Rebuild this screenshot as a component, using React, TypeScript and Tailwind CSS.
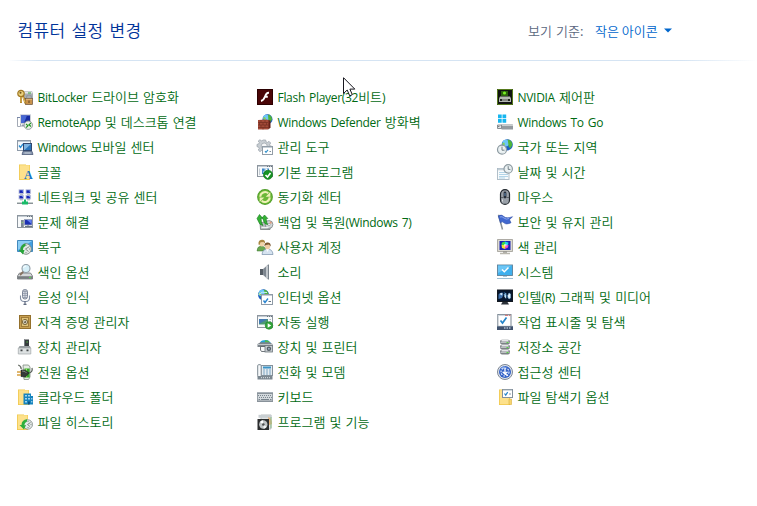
import React from 'react'

interface Item {
  label: string
  icon: React.ReactNode
}

function Folder({ x = 2 }: { x?: number }) {
  return (
    <>
      <path d={`M${x} 0.5h7v0.5h4v15h-11z`} fill="#f0c94e" />
      <path d={`M${x + 0.8} 1.2h9.6v14h-9.6z`} fill="#fde18b" />
    </>
  )
}

function Clock({ cx, cy, r }: { cx: number; cy: number; r: number }) {
  return (
    <>
      <circle cx={cx} cy={cy} r={r} fill="#edf3f4" stroke="#8d9aa1" strokeWidth="1.2" />
      <circle cx={cx} cy={cy} r={r - 1.3} fill="none" stroke="#c3d0d6" strokeWidth="0.6" strokeDasharray="0.6 1.2" />
      <path d={`M${cx} ${cy - r + 1.5}v${r - 1}h${r - 2}`} fill="none" stroke="#65747c" strokeWidth="0.9" />
    </>
  )
}

function Globe({ cx, cy, r }: { cx: number; cy: number; r: number }) {
  return (
    <>
      <circle cx={cx} cy={cy} r={r} fill="#1d5fc4" />
      <circle cx={cx - r * 0.25} cy={cy - r * 0.3} r={r * 0.6} fill="#6cc6f8" />
      <path d={`M${cx + 0.5} ${cy - r + 0.3}q${r * 0.8} 0.8 ${r - 1} ${r}l-2 ${r * 0.6}l-1.6 -2z`} fill="#4fb53b" />
      <path d={`M${cx - r + 0.4} ${cy - 1}l2-1.6l1 2l-1.4 1.8z`} fill="#82d25d" />
    </>
  )
}

function Win({ h = 12 }: { h?: number }) {
  return (
    <>
      <rect x="0.5" y="1.5" width="15" height={h} fill="#f8fafb" stroke="#8d969f" />
      <path d="M1 2.5h14" stroke="#c3cbd2" />
      <path d="M10 2.5h1m1 0h1m1 0h1" stroke="#69747e" />
    </>
  )
}

const bitlocker = (
  <>
    <path d="M6 3.5L8 2h7l1 3v5H6z" fill="#a9aeb3" />
    <path d="M7.500 2.500h7.500v2H7z" fill="#e4e7e9" />
    <path d="M11 4h3" stroke="#36a536" />
    <path d="M9.500 10V8.500a2.500 2.500 0 015 0V10" fill="none" stroke="#929aa0" strokeWidth="1.2" />
    <rect x="8.500" y="9.500" width="7" height="6" fill="#c9924c" stroke="#68513a" strokeWidth="0.7" />
    <path d="M9 10.300h6" stroke="#eac38b" strokeWidth="0.8" />
    <path d="M12 11.500v2.500" stroke="#5a4220" />
    <circle cx="4" cy="4.500" r="3.200" fill="#ecd27c" stroke="#a07927" strokeWidth="1.200" />
    <circle cx="3.500" cy="3.800" r="1" fill="#6e521e" />
    <path d="M4 7.500v6.500M6 7l2.500 7.500" stroke="#a87a20" strokeWidth="2" />
    <path d="M4 8v5.500M6 8l2 5.500" stroke="#f2d681" strokeWidth="0.8" />
  </>
)

const remoteApp = (
  <>
    <path d="M0.5 3.500h3v9h-3z" fill="#fff" stroke="#a3aab5" />
    <path d="M0 3.500h3" stroke="#7988a8" />
    <rect x="3.500" y="0.9" width="10" height="8.600" fill="#172ca2" stroke="#cbd0d7" />
    <path d="M4 1.500h6L7 9H4z" fill="#4767d4" />
    <path d="M5 10.500h3v2H4z" fill="#929baa" />
    <circle cx="11.300" cy="11.200" r="4.200" fill="#e9eee9" stroke="#8d9698" strokeWidth="0.9" />
    <path d="M9 10l2 1.700l-2 2M14 9l-2 1.700l2 1.800" fill="none" stroke="#219522" strokeWidth="1.1" />
  </>
)

const mobility = (
  <>
    <rect x="0.5" y="1.500" width="13" height="10" fill="#f4f8fc" stroke="#8e9aa8" />
    <path d="M1 2.500h12" stroke="#bbc7d1" />
    <path d="M2 6.500l1.500 2L6 5" fill="none" stroke="#268bd0" strokeWidth="1.300" />
    <rect x="6.500" y="4.500" width="8" height="7" fill="#2b76bb" stroke="#31486f" />
    <path d="M7 5h7L7.500 11H7z" fill="#7cb4e2" />
    <path d="M6 12.300h9l1 3.200H5z" fill="#8997b0" stroke="#3f4f6f" strokeWidth="0.7" />
    <path d="M7.500 14h6" stroke="#dce4ea" strokeWidth="0.8" />
  </>
)

const fonts = (
  <>
    <Folder />
    <text x="7" y="15" fontFamily="Liberation Serif, serif" fontWeight="bold" fontSize="12" fill="#1775c4">A</text>
  </>
)

const network = (
  <>
    {[[2, 0.8], [9, 0.8], [2, 6.3], [9, 6.3]].map(([x, y]) => (
      <g key={`${x}-${y}`}>
        <rect x={x} y={y} width="4.6" height="3.6" fill="#1524b4" stroke="#c0c7dd" strokeWidth="0.9" />
        <path d={`M${x + 2.5} ${y + 0.7}h1.5v1.5z`} fill="#6c8af5" />
        <path d={`M${x + 1} ${y + 4.5}h3`} stroke="#9aa2b0" strokeWidth="0.9" />
      </g>
    ))}
    <path d="M0 14h16" stroke="#8b9298" strokeWidth="2" />
    <path d="M0 13.500h16" stroke="#d4dedb" strokeWidth="0.8" />
    <path d="M7 10.500h2V12.500h2v3H5v-3h2z" fill="#19ba68" />
  </>
)

const troubleshoot = (
  <>
    <Win h={12} />
    <rect x="7.500" y="5.500" width="7.500" height="5.500" fill="#1c31b2" stroke="#9aa3b8" strokeWidth="0.8" />
    <path d="M10 6h4.500v4z" fill="#627ff0" />
    <path d="M4 6h2.800v7H4z" fill="#7b8893" />
    <path d="M4.600 8.500h1.500" stroke="#8be26c" strokeWidth="0.7" />
    <path d="M8 12.500h7M11 11v1" stroke="#6a7682" />
  </>
)

const recovery = (
  <>
    <path d="M0.5 1.500h15V12.500h-15z" fill="#439fe0" stroke="#4289bd" />
    <path d="M1 2h14L1 11z" fill="#8bcef5" />
    <circle cx="9" cy="10" r="5.300" fill="#e2e9e6" stroke="#7a867f" strokeWidth="0.9" />
    <path d="M8.500 10l4-2.500M8.500 10l3 2.500M9 6v1m0 6v1m4-4h-1" fill="none" stroke="#69766e" strokeWidth="0.8" />
    <path d="M8.500 4.500A6 6 0 003.500 11H1.700L6 15.500l1.500-4.500H6A4 4 0 018.500 7z" fill="#27a53a" />
  </>
)

const indexing = (
  <>
    <path d="M2.500 9h11l2 3v3H0.5v-3z" fill="#d5d8da" stroke="#6b7073" strokeWidth="0.8" />
    <path d="M0.8 12.200h14.500v2.700H0.8z" fill="#787d80" />
    <path d="M12 13.500h2" stroke="#53dc48" />
    <path d="M6.800 7.200L3 11" stroke="#85715f" strokeWidth="1.800" />
    <circle cx="9" cy="4.500" r="4" fill="#d6eff8" stroke="#919da6" strokeWidth="1.100" />
    <path d="M6.500 4A2.500 2.500 0 019 2" fill="none" stroke="#fff" />
  </>
)

const speech = (
  <>
    <rect x="5.500" y="0.5" width="5" height="9.500" rx="2.300" fill="#d6dae3" stroke="#737d90" strokeWidth="0.9" />
    <path d="M6 2.500h4M6 4.500h4M6 6.500h4M6 8.500h4M8 1v8.500" stroke="#8992a3" strokeWidth="0.7" />
    <path d="M3.500 6.500V9.500A3.500 3.500 0 007 12.500h2A3.500 3.500 0 0012.500 9.500V6.500" fill="none" stroke="#8490a6" strokeWidth="1.100" />
    <path d="M8 12v3M6.500 15.300h3" stroke="#606b80" strokeWidth="1.200" />
  </>
)

const credential = (
  <>
    <rect x="2.500" y="1.500" width="11" height="13" fill="#c79f52" stroke="#94702c" />
    <rect x="4.500" y="3.500" width="7" height="9" fill="#e0c377" stroke="#9a7736" strokeWidth="0.9" />
    <circle cx="8" cy="8" r="2.600" fill="#d5cdb5" stroke="#745c2d" strokeWidth="0.9" />
    <circle cx="8" cy="8" r="1.100" fill="#5c5442" />
    <path d="M6.500 6.300l1 .9" stroke="#fff7df" />
  </>
)

const deviceManager = (
  <>
    <path d="M7 0.5h5v8h-5z" fill="#363b3e" />
    <path d="M7 .5h1v8h-1z" fill="#747b80" />
    <path d="M9.500 3h1.200" stroke="#63e44f" />
    <path d="M2.500 7h10.500l.8 2H1.500z" fill="#999fa2" />
    <path d="M1.300 9h12.500v6H1.300z" fill="#dce0e1" stroke="#a2a7a9" strokeWidth="0.7" />
    <path d="M3.500 10.500h2v1.800h-2zM9.500 10.500h2v1.800h-2z" fill="#414648" />
  </>
)

const power = (
  <>
    <path d="M6 1h5.500l1.500 2v10l-1.500 2.500H7z" fill="#e3eae3" stroke="#7d8c7f" strokeWidth="0.8" />
    <path d="M7.500 4.500h5.100v9H7.500z" fill="#35a728" />
    <path d="M8.500 4.500H10v9H8.500z" fill="#9aed6e" />
    <path d="M1.200 1q3 1 3 4" fill="none" stroke="#676d66" strokeWidth="1.300" />
    <path d="M4 6l4.500 .2L12 9l-3.500 4-4.500-.5z" fill="#353a38" stroke="#171c1a" strokeWidth="0.6" />
    <path d="M5 7l3 .5 1.500 1.500" fill="none" stroke="#899089" strokeWidth="0.9" />
    <path d="M0 8h4M0 11h4" stroke="#d6a040" strokeWidth="1.300" />
    <path d="M12 9q4-1 3-5" fill="none" stroke="#555d58" strokeWidth="1.200" />
  </>
)

const workFolders = (
  <>
    <Folder x={1} />
    <path d="M6.500 4.500h7.500V7h2v8.500H6.500z" fill="#1684be" />
    <path d="M8.200 6h1.600v1.600H8.200zM11.200 6h1.600v1.600h-1.600zM8.200 9h1.600v1.600H8.200zM11.200 9h1.600v1.600h-1.600zM8.200 12h1.600v1.600H8.200zM14.300 9h1v1.500h-1zM14.300 12h1v1.500h-1z" fill="#c5e9fb" />
    <path d="M11.200 12.500h1.500v3h-1.500z" fill="#0a4775" />
  </>
)

const fileHistory = (
  <>
    <Folder x={0} />
    <circle cx="10.800" cy="10.500" r="4.700" fill="#e4e9e8" stroke="#89938f" strokeWidth="0.9" />
    <path d="M10.500 10.500l3-2M10.500 10.500l2.500 2M11 7v1m0 5v1m3.500-3.500h-1" fill="none" stroke="#68736f" strokeWidth="0.8" />
    <path d="M10 5.300A6 6 0 004.500 11H2.500L7 15.500l2-4.500-1.700 .2Q7.500 8.500 10 7.500z" fill="#2faf3c" />
  </>
)

const flash = (
  <>
    <path d="M0 0h16v16H0z" fill="#4a0507" />
    <path d="M.5 .5h15v15H.5z" fill="none" stroke="#2b0001" />
    <path d="M12 3.800Q9.500 3.500 8 7.500T4 12M7.800 7.800h3" fill="none" stroke="#fff" strokeWidth="1.900" />
  </>
)

const firewall = (
  <>
    <Globe cx={10.5} cy={5.3} r={5} />
    <path d="M1 6l9-.5 2 1v8L11 15.500H1z" fill="#a34a38" />
    <path d="M1 8.500h10M1 11h10.500M1 13.500h10.500M4 6v2.500M8 6v2.500M2.500 8.500V11M6 8.500V11M9.500 8.500V11M4 11v2.500M8 11v2.500M6 13.500V15.500" stroke="#6b2a20" strokeWidth="0.6" fill="none" />
    <path d="M11.500 6v9.500l2-2V6.500z" fill="#652018" />
  </>
)

const adminTools = (
  <>
    <path d="M6.300 1h2.400l.3 1.800 1.500.6L12 2.300l1.700 1.700-1 1.600.5 1.400 1.800.4v2.300H9v4.300H6.500l-.6-1.900-1.400-.6L3 12.700 1.200 11l1-1.500-.6-1.400L0 7.700V5.400L1.600 5l.7-1.500L1.200 2 2.900.8l1.600 1 1.500-.6z" fill="#c8ced3" stroke="#969fa7" strokeWidth="0.7" />
    <circle cx="7.200" cy="7" r="3" fill="#f6f7f8" stroke="#a0a8af" strokeWidth="0.8" />
    <rect x="5.500" y="7.500" width="10" height="8" fill="#fff" stroke="#929da7" />
    <path d="M6 8.500h9" stroke="#c7d0d7" />
    <path d="M8 12l1 1.400 2-2.600" fill="none" stroke="#308fc9" strokeWidth="1.100" />
    <path d="M12.500 12.500h1.500" stroke="#819099" />
  </>
)

const defaultPrograms = (
  <>
    <Win h={11} />
    <path d="M2.500 4.500v6.500" stroke="#c5cdd4" />
    <path d="M5 4.500h7V10H5z" fill="#3d87c8" />
    <path d="M6 8.500l4-3.500M7.500 5H10v2.500" stroke="#fff" fill="none" />
    <circle cx="11" cy="10.800" r="4.600" fill="#169323" stroke="#107018" strokeWidth="0.6" />
    <path d="M8.500 11l2 2 3-4" fill="none" stroke="#fff" strokeWidth="1.600" />
  </>
)

const sync = (
  <>
    <circle cx="8" cy="8" r="7.900" fill="#4f9c28" />
    <circle cx="8" cy="8" r="7" fill="#6cb838" />
    <path d="M3.300 7.800A4.800 4.800 0 0111.300 4.300" fill="none" stroke="#f0f1b8" strokeWidth="2" />
    <path d="M13.300 3V7.700H8.700z" fill="#f0f1b8" />
    <path d="M12.700 8.400A4.800 4.800 0 014.700 11.800" fill="none" stroke="#f0f1b8" strokeWidth="2" />
    <path d="M2.700 13V8.500h4.600z" fill="#f0f1b8" />
  </>
)

const backup = (
  <>
    <path d="M3 9l8-2 3 5-1 3.500H3.500z" fill="#b8bebf" stroke="#646e6c" strokeWidth="0.7" />
    <circle cx="12" cy="10.500" r="3.900" fill="#d2d8d9" stroke="#7b8586" strokeWidth="0.8" />
    <circle cx="12" cy="10.500" r="1.200" fill="#fff" stroke="#6c7678" strokeWidth="0.5" />
    <path d="M13 7l2.500 2-3 1z" fill="#dc9b82" />
    <path d="M1.700 8L0 4.500 2.500.5 5.500 4H4q0 5 2 7.500Q2.500 11 1.700 8zM7 8L5.800 4.500H4.600L7.500 1 10.800 4.500H9.200q0 4 1.600 6Q7.500 10.500 7 8z" fill="#35b234" stroke="#177a22" strokeWidth="0.6" />
    <path d="M4.500 13.500h7" stroke="#f0f2f2" />
  </>
)

const users = (
  <>
    <path d="M0 12q0-4.500 4-5 5 .5 5 5z" fill="#6aa852" stroke="#3b7732" strokeWidth="0.5" />
    <ellipse cx="4.700" cy="4.300" rx="2.500" ry="3.200" fill="#efd3a9" />
    <path d="M1.500 5.500Q1 1 4.800.7T8 4.500L6.500 3 3.500 3.200 2.500 6z" fill="#a98743" />
    <path d="M5 15.500Q5.500 10 10.500 10T16 15.500z" fill="#d6e3f0" stroke="#7991aa" strokeWidth="0.7" />
    <path d="M9 10l1.500 3L12 10z" fill="#fff" />
    <ellipse cx="10.500" cy="7" rx="2.600" ry="3.300" fill="#efcaa3" />
    <path d="M7.500 7.500Q7 3.500 10.500 3.500T13.700 7.500L12 5.500 8.700 6z" fill="#78552f" />
  </>
)

const sound = (
  <>
    <path d="M3 5h3v6H3z" fill="#555d65" />
    <path d="M6 5l5-4.500v15L6 11z" fill="#a5acb3" />
    <path d="M6.300 5.200L9 2.800v10.500l-2.700-2.500z" fill="#7c858e" />
    <path d="M11.500 .5v15" stroke="#7b848c" />
    <path d="M10 2v12" stroke="#dde1e4" />
  </>
)

const internet = (
  <>
    <Globe cx={6.5} cy={5.8} r={5.5} />
    <path d="M1.500 5.500Q5 2 10 3.500" fill="none" stroke="#c8eefa" />
    <rect x="4.500" y="5.500" width="11" height="10" fill="#fff" stroke="#8e9aa6" />
    <path d="M5 6.500h10" stroke="#c6ced7" />
    <path d="M6.500 11.500l1.500 2 3-4" fill="none" stroke="#2b85d0" strokeWidth="1.400" />
    <path d="M11.500 12.500h2.500" stroke="#657684" />
  </>
)

const autoplay = (
  <>
    <Win h={12} />
    <path d="M2 5h9v5.500H2z" fill="#4b9a72" />
    <path d="M2 5h9L2 10z" fill="#4479b0" />
    <path d="M12.500 5.500h1.500M12.500 7.500h1.500" stroke="#a9b3bc" />
    <circle cx="12" cy="11.500" r="3.800" fill="#31a539" stroke="#238329" strokeWidth="0.6" />
    <path d="M10.700 9.200l3.500 2.300-3.500 2.300z" fill="#fff" />
  </>
)

const printers = (
  <>
    <path d="M3 3.500Q5 .5 11 1.200l3 2.800H3z" fill="#22a4d6" />
    <path d="M8 1.200q4-.3 5 2.500H8z" fill="#50ba4c" />
    <path d="M0.5 5l3-1.700h9l3 1.700v3H.5z" fill="#7c848b" />
    <path d="M1 5.500h14" stroke="#c0c6ca" />
    <path d="M3.500 7.500h5V12.500h-4L3.500 11z" fill="#f6f7f8" stroke="#4e565c" strokeWidth="0.8" />
    <rect x="8" y="6.500" width="7.500" height="6.500" fill="#c6cbcf" stroke="#6c757c" strokeWidth="0.8" />
    <circle cx="11.900" cy="9.800" r="2.200" fill="#535d66" />
    <circle cx="11.900" cy="9.800" r="1" fill="#9eafbe" />
  </>
)

const phone = (
  <>
    <rect x="4" y="1.500" width="11.500" height="10" fill="#e4ebf0" stroke="#84919b" />
    <rect x="0.7" y="0.7" width="3.500" height="12" rx="1" fill="#f6f8fa" stroke="#7d8992" />
    <path d="M6 2.500h8v2H6z" fill="#3993c7" />
    <path d="M6 6h2M9 6h2M12 6h2M6 8h2M9 8h2M12 8h2M6 10h2M9 10h2M12 10h2" stroke="#6f9dbd" strokeWidth="0.9" />
    <path d="M.5 12h15v3.500H.5z" fill="#7b8790" />
    <path d="M4 13.700h1m1 0h1m1 0h1m1 0h1m1 0h1" stroke="#dde4e8" />
  </>
)

const keyboard = (
  <>
    <path d="M0 3h16v10H0z" fill="#89929a" />
    <path d="M0 3.500h16" stroke="#a9b1b8" />
    <path d="M.8 5h14.400v6.500H.8z" fill="#d3d9dd" />
    <path d="M1 6.500h14M2 8.500h13" stroke="#7b868f" strokeDasharray="1 1" />
    <path d="M1.500 10.500h1.500m1 0h8m1 0h1.500" stroke="#78838c" />
  </>
)

const programs = (
  <>
    <path d="M4 1h10v14H4z" fill="#e0e3e4" stroke="#a8adaf" strokeWidth="0.7" />
    <path d="M1.500 .8h13v3h-13z" fill="#c9cfd2" />
    <path d="M11 3q4 1 4 7l-3 1z" fill="#e3b27c" />
    <path d="M14 3v11" stroke="#88bd88" />
    <rect x="0.5" y="5" width="11.500" height="11" fill="#2b2d2e" />
    <circle cx="6.300" cy="10.500" r="4.200" fill="#bfc3c5" />
    <path d="M6.300 10.500L3 8a4.200 4.200 0 013-1.700z" fill="#fff" />
    <path d="M6.300 10.500l3.400 2.300a4.200 4.200 0 01-3 1.900z" fill="#f2f4f4" />
    <circle cx="6.300" cy="10.500" r="1.300" fill="#4a4d4e" />
  </>
)

const nvidia = (
  <>
    <path d="M0 0h16v16H0z" fill="#101310" />
    <path d="M.5 .5h15v15H.5z" fill="none" stroke="#567a1d" />
    <path d="M4 2h7v5H4z" fill="#2c650c" />
    <circle cx="7.500" cy="4" r="1.600" fill="#79ec25" />
    <path d="M3 7.500h10l1 2v3.500H2V9.500z" fill="#b4b9b2" />
    <path d="M3 10h10v2H3z" fill="#20251e" />
    <path d="M5 11h6" stroke="#e4e7e1" />
  </>
)

const windowsToGo = (
  <>
    <path d="M1 .5h3.700v3.700H1zM5.500 .5h3.700v3.700H5.500zM1 5h3.700v3.700H1zM5.500 5h3.700v3.700H5.500z" fill="#16b6ef" />
    <path d="M4.500 10h11l.5 1v4.500H4.500z" fill="#949a9f" />
    <path d="M4.500 10.300H16v1.500H4.500z" fill="#d8dbdd" />
    <path d="M.5 11h4v3.500h-4z" fill="#e1e3e4" stroke="#70777c" strokeWidth="0.8" />
    <path d="M1.300 12h1v1h-1z" fill="#555" />
  </>
)

const region = (
  <>
    <Globe cx={10.2} cy={5.8} r={5.6} />
    <Clock cx={5} cy={10.7} r={4.5} />
  </>
)

const dateTime = (
  <>
    <rect x="0.5" y="4.500" width="11.500" height="11" fill="#f8fbfc" stroke="#a9b9c4" strokeWidth="0.9" />
    <path d="M1 5.500h11" stroke="#c2ced5" strokeWidth="1.600" />
    <path d="M2.500 8.500h8.500M2.500 10.500h8.500M2.500 12.500h8.500M2.500 14h6" stroke="#6faed4" strokeWidth="1" strokeDasharray="1 1" />
    <Clock cx={11.2} cy={4.9} r={4.2} />
  </>
)

const mouse = (
  <>
    <rect x="3.500" y="0.6" width="9" height="14.800" rx="4.500" fill="#99a0a8" stroke="#23292f" strokeWidth="1.200" />
    <path d="M4 8.500h2.500m3 0H12" stroke="#42494f" strokeWidth="0.7" />
    <rect x="6.600" y="2.500" width="2.800" height="7" rx="1.400" fill="#252d38" />
    <path d="M8 4v3" stroke="#6a95be" />
    <path d="M5.500 10.500v2" stroke="#dde0e3" />
  </>
)

const security = (
  <>
    <path d="M1.500 .8l4 14.700" stroke="#8a9297" strokeWidth="1.500" />
    <path d="M1.300 2q3-2 5.500.5t8.700.2l-3 3 1.500 3Q9 11 7 8.800T3.500 9z" fill="#4168cf" stroke="#2c4ca6" strokeWidth="0.6" />
    <path d="M3 3q2-1 4 1t5 .5" fill="none" stroke="#88a4ee" />
  </>
)

const color = (
  <>
    <rect x="0.6" y="0.6" width="14.800" height="11.800" fill="#e0ded6" stroke="#a1a098" strokeWidth="0.9" />
    <path d="M2.500 2h11v9h-11z" fill="#1823b4" />
    <path d="M5 3.500l3-1v3.500H4.500z" fill="#41d843" />
    <path d="M8 2.500l3.500 1L11 6H8z" fill="#22d3e4" />
    <path d="M4.500 6H8v4L5 9z" fill="#f6dd31" />
    <path d="M8 6h3.500L11 8.500 8 10z" fill="#e946ca" />
    <path d="M7 5h2.500v2.500H7z" fill="#fff" opacity=".6" />
    <path d="M6 12.500h4v1.200H6z" fill="#8c8b84" />
    <path d="M3 14.500h10" stroke="#b9b7ae" strokeWidth="1.500" />
  </>
)

const system = (
  <>
    <rect x="0.5" y="1" width="15" height="10.500" fill="#3fb0ee" stroke="#5f8298" strokeWidth="0.9" />
    <path d="M1 1.500h14L1 9z" fill="#6cc6f6" />
    <path d="M5 5.500l2.300 2.300L11.500 3.500" fill="none" stroke="#fff" strokeWidth="1.500" />
    <path d="M6 12.500h4" stroke="#a9cbdf" />
    <path d="M0 14.500h16" stroke="#9dbfd3" />
  </>
)

const intel = (
  <>
    <rect x="0.5" y="1" width="15" height="11.500" fill="#07172f" stroke="#131920" />
    <path d="M1.500 5.500q2-2.500 4-2l1 2-1.500 3.500-3.500 1z" fill="#3f72ad" />
    <path d="M2.500 5q1.500-1.500 3-.8l-.5 2.300z" fill="#d5e8f6" />
    <path d="M7.500 8V5l1.500-1v5.500M10.500 7l1.500-3 1.500 1v4l-1.500 1-1-1.500" fill="#e2f1fb" stroke="#82b9e1" strokeWidth="0.5" />
    <path d="M7 3l4 6" stroke="#287ac3" strokeWidth="0.6" />
    <path d="M5.500 13h5l1.500 2.500H4z" fill="#2a3038" />
  </>
)

const taskbar = (
  <>
    <rect x="0.8" y="0.5" width="13.200" height="12" fill="#fff" stroke="#7b8793" />
    <path d="M1.500 1.300h12" stroke="#c5d0d9" />
    <path d="M8 1.300h3m1 0h1.500" stroke="#d36b69" />
    <path d="M3.500 6.500l2 2.500 4-5.500" fill="none" stroke="#2584c8" strokeWidth="1.700" />
    <path d="M0 12h16v4H0z" fill="#40526d" />
    <path d="M0 12.300h16" stroke="#8796a9" strokeWidth="0.7" />
    <path d="M7 14h1.500m1 0H11m1 0h1.500" stroke="#aebdce" strokeWidth="1.400" />
  </>
)

const storage = (
  <>
    {[0.8, 5.8, 10.8].map((y) => (
      <g key={y}>
        <rect x="3" y={y} width="10" height="4.600" rx="1.800" fill="#7d8286" />
        <path d={`M4.5 ${y + 1}h7`} stroke="#f0f1f2" strokeWidth="1.400" />
        <path d={`M3.5 ${y + 2.6}h9`} stroke="#c3c7ca" />
        <path d={`M9.5 ${y + 2.8}h2`} stroke="#4ed43d" />
      </g>
    ))}
  </>
)

const access = (
  <>
    <circle cx="8" cy="8" r="7.500" fill="#e0e5ec" stroke="#7d8795" />
    <circle cx="8" cy="8" r="6" fill="#3361c6" />
    <path d="M4 5A5 5 0 018 3" fill="none" stroke="#8eb5f3" />
    <circle cx="8" cy="8" r="4" fill="none" stroke="#e9f2ff" strokeWidth="1.100" strokeDasharray="1.800 1.200" />
    <path d="M8 4v6M5.700 7.800L8 10.200l2.500-2.400M8 10l3 1.500" fill="none" stroke="#fff" strokeWidth="1.300" />
  </>
)

const explorer = (
  <>
    <Folder />
    <path d="M12 10h2.500v5.500H12z" fill="#f8d56e" stroke="#d9af3d" strokeWidth="0.6" />
    <rect x="5.500" y="0.5" width="10" height="8" fill="#fff" stroke="#83909c" />
    <path d="M6 1.300h9" stroke="#c7d0d8" />
    <path d="M7.500 4.500l1.200 1.700 2-3" fill="none" stroke="#2584c8" strokeWidth="1.200" />
    <path d="M12 5h2" stroke="#8796a3" />
  </>
)

const columns: Item[][] = [
  [
    { label: 'BitLocker 드라이브 암호화', icon: bitlocker },
    { label: 'RemoteApp 및 데스크톱 연결', icon: remoteApp },
    { label: 'Windows 모바일 센터', icon: mobility },
    { label: '글꼴', icon: fonts },
    { label: '네트워크 및 공유 센터', icon: network },
    { label: '문제 해결', icon: troubleshoot },
    { label: '복구', icon: recovery },
    { label: '색인 옵션', icon: indexing },
    { label: '음성 인식', icon: speech },
    { label: '자격 증명 관리자', icon: credential },
    { label: '장치 관리자', icon: deviceManager },
    { label: '전원 옵션', icon: power },
    { label: '클라우드 폴더', icon: workFolders },
    { label: '파일 히스토리', icon: fileHistory },
  ],
  [
    { label: 'Flash Player(32비트)', icon: flash },
    { label: 'Windows Defender 방화벽', icon: firewall },
    { label: '관리 도구', icon: adminTools },
    { label: '기본 프로그램', icon: defaultPrograms },
    { label: '동기화 센터', icon: sync },
    { label: '백업 및 복원(Windows 7)', icon: backup },
    { label: '사용자 계정', icon: users },
    { label: '소리', icon: sound },
    { label: '인터넷 옵션', icon: internet },
    { label: '자동 실행', icon: autoplay },
    { label: '장치 및 프린터', icon: printers },
    { label: '전화 및 모뎀', icon: phone },
    { label: '키보드', icon: keyboard },
    { label: '프로그램 및 기능', icon: programs },
  ],
  [
    { label: 'NVIDIA 제어판', icon: nvidia },
    { label: 'Windows To Go', icon: windowsToGo },
    { label: '국가 또는 지역', icon: region },
    { label: '날짜 및 시간', icon: dateTime },
    { label: '마우스', icon: mouse },
    { label: '보안 및 유지 관리', icon: security },
    { label: '색 관리', icon: color },
    { label: '시스템', icon: system },
    { label: '인텔(R) 그래픽 및 미디어', icon: intel },
    { label: '작업 표시줄 및 탐색', icon: taskbar },
    { label: '저장소 공간', icon: storage },
    { label: '접근성 센터', icon: access },
    { label: '파일 탐색기 옵션', icon: explorer },
  ],
]

// Latin runs are set a little smaller than the Hangul next to them
function Label({ text }: { text: string }) {
  const parts = text.split(/([A-Za-z0-9()]+(?: [A-Za-z0-9()]+)*)/).filter(Boolean)
  return (
    <>
      {parts.map((part, i) =>
        /[A-Za-z0-9()]/.test(part) ? (
          <span key={i} className="font-['Open_Sans',sans-serif] text-[12px] font-normal tracking-[-0.3px]">{part}</span>
        ) : (
          <span key={i}>{part}</span>
        )
      )}
    </>
  )
}

export default function App() {
  return (
    <div className="relative h-[506px] w-[757px] overflow-hidden bg-white font-['Noto_Sans_CJK_KR',sans-serif] text-[13px] font-[350] [word-spacing:1.2px]">
      <header className="flex h-[60px] items-center pl-[17.5px]">
        <h1 className="w-[510.5px] text-[17px] tracking-[0.38px] [word-spacing:1.8px] text-[#003399]">컴퓨터 설정 변경</h1>
        <span className="w-[67px] whitespace-nowrap pt-px text-[#5a6780]">보기 기준:</span>
        <button className="flex items-center gap-1.5 whitespace-nowrap pt-px text-[#0066cc]">
          작은 아이콘
          <svg width="8" height="5" viewBox="0 0 8 5">
            <path d="M0 0.5h8L4 4.500z" fill="#0066cc" />
          </svg>
        </button>
      </header>
      <div className="h-px bg-linear-to-r from-white from-1% via-[#d5e4f3] via-5% to-[#d5e4f3] to-90%">
        <div className="ml-auto h-px w-[75px] bg-linear-to-r from-[#d5e4f3] to-white" />
      </div>

      <main className="mt-[23px] flex pl-[17px]">
        {columns.map((items, i) => (
          <ul key={i} className="w-[240px]">
            {items.map((item) => (
              <li key={item.label} className="flex h-[25px] items-center gap-[4.5px] whitespace-nowrap text-[#006a12]">
                <svg width="16" height="16" viewBox="0 0 16 16" className="shrink-0 overflow-visible">{item.icon}</svg>
                <a className="leading-[25px]"><Label text={item.label} /></a>
              </li>
            ))}
          </ul>
        ))}
      </main>

      {/* mouse pointer */}
      <svg width="13" height="20" viewBox="0 0 13 20" className="absolute left-[343px] top-[77px]">
        <path d="M0.5 0.7V16.500L4.200 13l2.500 5.800 2.600-1.100L6.900 12.100h4.900z" fill="#fff" stroke="#16161e" />
      </svg>
    </div>
  )
}
